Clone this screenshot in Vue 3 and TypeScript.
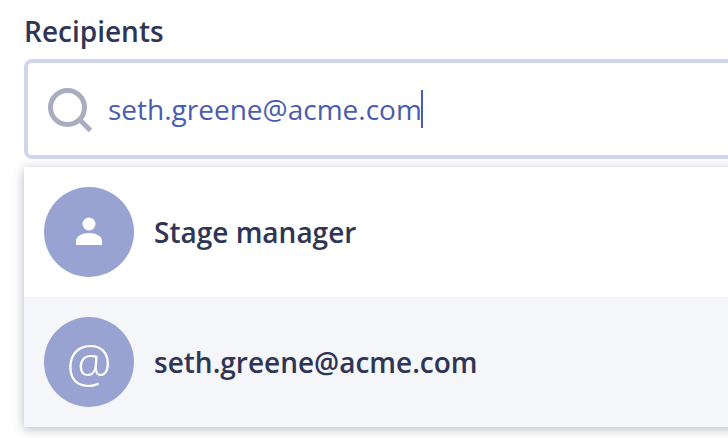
<script setup lang="ts">
interface Option {
  id: string
  label: string
  kind: 'role' | 'email'
}

const query = 'seth.greene@acme.com'

const options: Option[] = [
  { id: 'stage', label: 'Stage manager', kind: 'role' },
  { id: 'email', label: 'seth.greene@acme.com', kind: 'email' },
]
</script>

<template>
  <div class="page">
    <div class="field">
      <div class="field__label">Recipients</div>
      <div class="search">
        <svg class="search__icon" viewBox="0 0 46 46" width="46" height="46" fill="none" stroke="#a9adc0" aria-hidden="true">
          <circle cx="19.5" cy="19.5" r="17" stroke-width="5" />
          <line x1="31.5" y1="31.5" x2="42.5" y2="42.5" stroke-width="5" />
        </svg>
        <span class="search__value">{{ query }}</span>
        <span class="search__caret"></span>
      </div>
      <ul class="menu">
        <li v-for="opt in options" :key="opt.id" class="menu__row" :class="{ 'is-active': opt.kind === 'email' }">
          <span class="avatar">
            <svg v-if="opt.kind === 'role'" viewBox="0 0 28 30" width="28" height="30" fill="#fff" aria-hidden="true">
              <circle cx="14" cy="7" r="6.5" />
              <path d="M1 28v-4c0-5 6-8 13-8s13 3 13 8v4z" />
            </svg>
            <span v-else class="avatar__at">@</span>
          </span>
          <span class="menu__text">{{ opt.label }}</span>
        </li>
      </ul>
    </div>
  </div>
</template>

<style>
html,
body {
  margin: 0;
  background: #fff;
}
</style>

<style scoped>
.page {
  width: 728px;
  height: 438px;
  overflow: hidden;
  box-sizing: border-box;
  padding: 12px 0 0 24px;
  font-family: "Open Sans", "Liberation Sans", sans-serif;
}

.field {
  width: 760px;
}

.field__label {
  height: 47px;
  line-height: 38px;
  font-size: 28px;
  font-weight: 600;
  color: #2e3555;
}

.search {
  display: flex;
  align-items: center;
  box-sizing: border-box;
  height: 100px;
  padding-left: 20px;
  border: 4px solid #d2d6ea;
  border-radius: 8px;
  background: #fff;
}

.search__icon {
  flex: none;
  margin-top: 4px;
}

.search__value {
  margin-left: 14px;
  font-size: 28px;
  color: #4a5cb0;
}

.search__caret {
  width: 2px;
  height: 38px;
  margin-left: -1px;
  background: #4a5cb0;
}

.menu {
  margin: 8px 0 0;
  padding: 0;
  list-style: none;
  background: #fff;
  box-shadow: 0 2px 10px rgba(45, 51, 83, 0.35);
}

.menu__row {
  display: flex;
  align-items: center;
  height: 130px;
  padding-left: 20px;
}

.menu__row.is-active {
  background: #f5f6fa;
}

.avatar {
  display: flex;
  flex: none;
  align-items: center;
  justify-content: center;
  width: 90px;
  height: 90px;
  border-radius: 50%;
  background: #99a3d2;
}

.avatar__at {
  font-size: 51px;
  font-weight: 350;
  line-height: 1;
  color: #fff;
}

.menu__text {
  margin-left: 20px;
  font-size: 28px;
  font-weight: 600;
  color: #2e3555;
}
</style>
